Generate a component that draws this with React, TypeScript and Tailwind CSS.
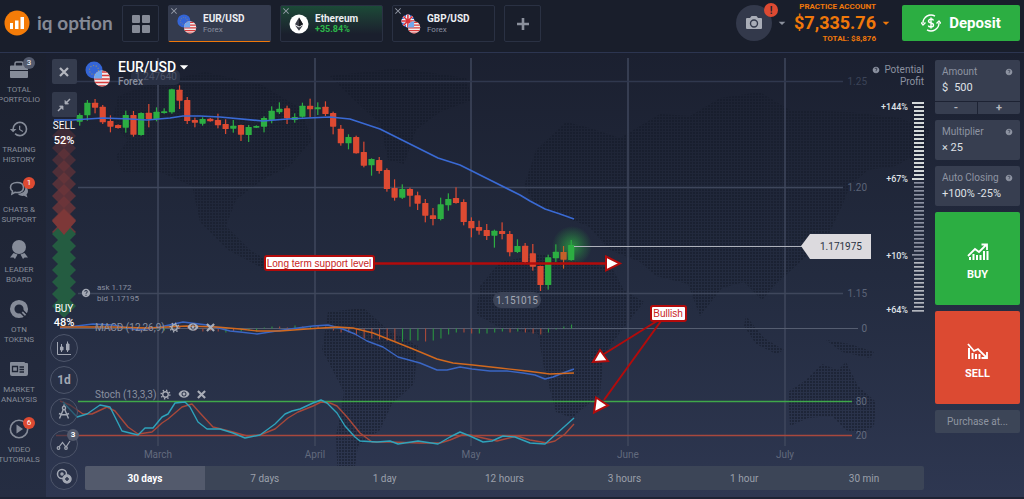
import type { ReactNode } from "react"
import { MdArrowDropDown, MdClose, MdHelp, MdHistory, MdVisibility } from "react-icons/md"

type Candle = [top: number, bottom: number, high: number, low: number, up: 0 | 1]
type Point = [x: number, y: number]

// vertical values are thirds of a chart unit, counted from y = 70
const CANDLES: Candle[] = [
  [135, 155, 130, 167, 1], [98, 136, 90, 152, 1], [98, 113, 87, 130, 0], [110, 157, 105, 162, 0],
  [153, 170, 136, 187, 0], [165, 174, 163, 176, 0], [135, 173, 122, 188, 1], [135, 194, 123, 200, 0],
  [129, 195, 127, 197, 1], [128, 147, 102, 172, 0], [125, 148, 112, 154, 1], [124, 129, 115, 131, 1],
  [58, 127, 56, 131, 1], [59, 92, 46, 117, 0], [90, 153, 81, 162, 0], [150, 158, 143, 172, 0],
  [147, 161, 142, 167, 1], [146, 154, 144, 155, 0], [150, 166, 131, 175, 0], [162, 177, 148, 192, 0],
  [167, 176, 150, 188, 1], [165, 194, 164, 213, 0], [171, 195, 165, 216, 1], [168, 173, 166, 174, 1],
  [144, 170, 139, 187, 1], [122, 150, 109, 160, 1], [116, 127, 97, 132, 1], [115, 145, 107, 162, 0],
  [141, 150, 130, 158, 1], [107, 140, 98, 143, 1], [107, 118, 86, 142, 0], [112, 118, 97, 135, 1],
  [110, 132, 94, 138, 0], [129, 170, 125, 193, 0], [176, 220, 165, 227, 0], [201, 220, 193, 238, 1],
  [201, 250, 197, 251, 0], [246, 287, 215, 292, 0], [267, 286, 265, 317, 1], [270, 303, 261, 311, 0],
  [300, 357, 295, 365, 0], [354, 383, 328, 392, 0], [357, 383, 343, 387, 1], [357, 377, 353, 410, 0],
  [376, 401, 365, 420, 0], [399, 437, 387, 457, 0], [436, 447, 414, 466, 0], [403, 447, 383, 451, 1],
  [387, 406, 370, 422, 1], [384, 399, 352, 401, 0], [396, 456, 388, 466, 0], [453, 475, 442, 502, 0],
  [471, 482, 452, 494, 0], [480, 498, 462, 510, 0], [482, 497, 479, 533, 1], [483, 492, 457, 508, 0],
  [492, 547, 483, 559, 0], [528, 546, 508, 549, 1], [527, 576, 519, 580, 0], [550, 590, 522, 602, 0],
  [588, 645, 587, 663, 0], [562, 645, 554, 659, 1], [545, 565, 523, 576, 1], [546, 569, 528, 596, 0],
  [525, 570, 510, 572, 1],
]

const MOVING_AVERAGE: Point[] = [
  [54, 120], [72, 120], [103, 118], [130, 119], [147, 120], [170, 118], [183, 116], [200, 116], [220, 117],
  [263, 121], [287, 119], [330, 117], [350, 119], [380, 129], [400, 139], [420, 149], [438, 158], [460, 165],
  [490, 180], [520, 195], [530, 201], [545, 209], [560, 214], [574, 219],
]

const MACD_FAST: Point[] = [
  [60, 328], [93, 324], [113, 325], [138, 330], [160, 327], [183, 322], [207, 325], [230, 331], [240, 332],
  [257, 334], [270, 332], [290, 329], [313, 326], [328, 325], [340, 328], [355, 334], [367, 341], [383, 347],
  [398, 357], [420, 363], [437, 370], [447, 370], [460, 367], [472, 369], [490, 371], [507, 371], [523, 373],
  [535, 375], [545, 379], [553, 377], [563, 373], [574, 369],
]

const MACD_SLOW: Point[] = [
  [60, 327], [113, 327], [147, 328], [187, 326], [217, 327], [240, 329], [257, 331], [280, 331], [307, 329],
  [337, 327], [353, 328], [373, 333], [393, 341], [413, 349], [437, 359], [453, 363], [473, 365], [500, 368],
  [527, 371], [550, 374], [574, 373],
]

const STOCH_FAST: Point[] = [
  [63, 402], [77, 417], [87, 414], [100, 405], [110, 407], [122, 431], [138, 435], [145, 428], [153, 428],
  [162, 417], [168, 414], [175, 403], [185, 402], [190, 407], [198, 422], [207, 429], [220, 429], [233, 433],
  [245, 438], [260, 435], [275, 424], [285, 414], [292, 411], [300, 409], [313, 403], [321, 400], [327, 403],
  [337, 413], [345, 426], [355, 437], [360, 441], [377, 442], [390, 441], [398, 444], [418, 441], [438, 444],
  [450, 437], [460, 432], [470, 436], [483, 442], [492, 441], [503, 436], [515, 437], [530, 443], [545, 444],
  [574, 418],
]

const STOCH_SLOW: Point[] = [
  [60, 401], [70, 405], [83, 414], [92, 414], [107, 407], [115, 411], [128, 427], [138, 434], [152, 432],
  [162, 423], [168, 419], [182, 407], [192, 404], [200, 413], [213, 427], [233, 432], [247, 436], [260, 435],
  [275, 429], [288, 418], [298, 412], [313, 406], [321, 402], [330, 403], [337, 406], [347, 417], [360, 433],
  [372, 442], [390, 442], [420, 443], [440, 443], [450, 440], [462, 435], [470, 435], [483, 438], [497, 441],
  [517, 436], [530, 440], [547, 443], [555, 441], [565, 434], [574, 424],
]

// signed bar lengths, the last one under the last candle
const HISTOGRAM: [length: number, up: 0 | 1][] = [
  [2, 0], [1, 0], [1, 1], [2, 0], [3, 0], [2, 0], [1, 1], [2, 1], [-2, 1], [-2, 0], [-1, 0], [2, 0], [3, 0],
  [2, 0], [3, 0], [4, 1], [3, 0], [3, 1], [2, 1], [3, 1], [-1, 1], [-2, 1], [-2, 0], [-1, 0], [-3, 1], [-2, 0],
  [-2, 1], [-3, 0], [-2, 0], [2, 0], [4, 0], [4, 0], [7, 0], [10, 0], [10, 0], [11, 0], [12, 0], [13, 0],
  [13, 1], [12, 1], [12, 1], [13, 0], [12, 1], [10, 1], [6, 1], [4, 1], [4, 0], [5, 0], [5, 1], [5, 1], [4, 1],
  [3, 1], [4, 0], [3, 1], [4, 0], [5, 0], [6, 0], [4, 1], [1, 1], [-2, 1], [-4, 1],
]

const CONTINENTS = [
  "118,96 150,84 205,72 260,84 300,108 312,140 290,166 262,180 236,200 226,226 250,250 270,262 262,268 228,250 200,222 192,186 160,172 122,172 116,156 128,140 112,124",
  "330,76 400,68 466,78 472,100 440,112 416,130 404,164 388,160 380,124 350,96",
  "328,312 364,308 388,330 418,346 414,384 392,404 380,430 358,446 352,486 338,482 336,436 344,392 322,350",
  "524,186 536,150 566,122 590,128 620,138 660,114 690,116 720,98 760,92 790,110 850,112 900,118 930,130 924,150 896,166 868,170 850,186 842,206 828,236 800,262 776,284 762,300 744,282 722,288 700,316 688,284 656,276 640,262 610,250 588,226 560,216 536,206",
  "480,286 500,262 540,254 580,262 612,268 624,290 644,302 622,330 604,354 600,394 572,418 556,412 544,368 538,334 500,328 476,314",
  "788,392 806,380 822,364 838,370 846,362 858,386 876,402 874,426 860,434 846,430 832,416 808,418 790,426",
  "746,316 764,338 784,350 776,354 756,344 744,326",
  "826,340 850,344 874,352 870,358 842,352",
]

const GRID_X: [number, string][] = [[158, "March"], [315, "April"], [471, "May"], [628, "June"], [785, "July"]]
const GRID_Y: [number, string][] = [[81, "1.25"], [187, "1.20"], [293, "1.15"]]

const TIMEFRAMES = ["30 days", "7 days", "1 day", "12 hours", "3 hours", "1 hour", "30 min"]

const toPath = (points: Point[]) => "M" + points.map((p) => p.join(" ")).join("L")

function Chart() {
  return (
    <svg
      viewBox="46 53 978 444"
      preserveAspectRatio="xMinYMin meet"
      className="pointer-events-none absolute inset-0 size-full font-[Roboto,sans-serif] text-[10px]"
      role="img"
      aria-label="EUR/USD price chart"
    >
      <defs>
        <pattern id="dots" width="3" height="3" patternUnits="userSpaceOnUse">
          <rect width="2" height="2" fill="#141a28" />
        </pattern>
        <radialGradient id="glow">
          <stop offset="0" stopColor="#2cae42" stopOpacity="0.75" />
          <stop offset="0.6" stopColor="#2cae42" stopOpacity="0.28" />
          <stop offset="1" stopColor="#2cae42" stopOpacity="0" />
        </radialGradient>
      </defs>

      <g fill="url(#dots)" opacity="0.5">
        {CONTINENTS.map((points) => (
          <polygon key={points} points={points} />
        ))}
      </g>

      <g stroke="#3f475c">
        {GRID_X.map(([x]) => (
          <path key={x} d={`M${x} 58V446`} strokeWidth="1.500" />
        ))}
        <path d="M56 81.500H843" stroke="#30384e" strokeWidth="1.500" />
        <path d="M78 187.500H843" strokeWidth="1.500" />
        <path d="M78 293.500H843" strokeWidth="1.500" />
        <path d="M60 328.500H858" stroke="#555d70" />
      </g>
      <g fill="#626a7d">
        {GRID_Y.map(([y, label]) => (
          <text key={label} x="867" y={y + 4} textAnchor="end" fill={y < 100 ? "#3b4357" : "#5b6377"}>
            {label}
          </text>
        ))}
        <text x="867" y="332" textAnchor="end">0</text>
        <text x="867" y="405" textAnchor="end">80</text>
        <text x="867" y="439" textAnchor="end">20</text>
        {GRID_X.map(([x, label]) => (
          <text key={label} x={x} y="458" textAnchor="middle">{label}</text>
        ))}
      </g>

      <g>
        {Array.from({ length: 9 }, (_, i) => (
          <path key={i} d={`M64 ${124 + i * 12}l12 12l-12 12l-12 -12z`} fill="#6f3639" opacity={0.4 + i * 0.07} />
        ))}
        {Array.from({ length: 7 }, (_, i) => (
          <path key={i} d={`M64 ${222 + i * 12}l12 12l-12 12l-12 -12z`} fill="#245c41" />
        ))}
        <path d="M52 221l12 -12l12 12l-12 14z" fill="#7d3838" />
      </g>

      <g>
        <rect x="131" y="70" width="49" height="15" rx="5" fill="#293044" />
        <text x="156" y="80" textAnchor="middle" fill="#4b5367">1.247640</text>
      </g>

      <circle cx="572" cy="246" r="20" fill="url(#glow)" />
      {CANDLES.map(([top, bottom, high, low, up], i) => {
        const x = 79.7 + i * 7.68
        const fill = i === 63 ? "#c3602a" : up ? "#2cae42" : "#dd4a32"
        return (
          <g key={i} fill={fill}>
            <rect x={x - 0.6} y={70 + high / 3} width="1.200" height={(low - high) / 3} />
            <rect x={x - 3.1} y={70 + top / 3} width="6.200" height={(bottom - top) / 3} rx="0.6" />
          </g>
        )
      })}
      <path d={toPath(MOVING_AVERAGE)} fill="none" stroke="#3a6ad4" strokeWidth="1.600" strokeLinejoin="round" />

      {HISTOGRAM.map(([length, up], i) => {
        const x = 571.5 - (HISTOGRAM.length - 1 - i) * 7.68
        return <path key={i} d={`M${x} 328.500v${length}`} stroke={up ? "#2a9440" : "#a94a3a"} strokeWidth="1.100" />
      })}
      <g fill="none" strokeWidth="1.400" strokeLinejoin="round">
        <path d={toPath(MACD_FAST)} stroke="#3a66c4" />
        <path d={toPath(MACD_SLOW)} stroke="#d2691e" />
        <path d="M78 401.500H852" stroke="#3fa84a" strokeWidth="1.500" />
        <path d="M56 435.500H852" stroke="#a8483d" strokeWidth="1.300" />
        <path d={toPath(STOCH_SLOW)} stroke="#a8483a" />
        <path d={toPath(STOCH_FAST)} stroke="#2fa3bb" />
      </g>

      <rect x="493" y="292" width="48" height="16" rx="8" fill="#3b4357" />
      <text x="517" y="304" textAnchor="middle" fill="#a3a8b4">1.151015</text>

      <path d="M574 246.500H802" stroke="#aeb2bb" />
      <path d="M801 246l9-12h61v25h-61z" fill="#dcdade" />
      <text x="841" y="250" textAnchor="middle" fill="#2b3242">1.171975</text>

      <g stroke="#b30b0b" strokeWidth="2" fill="#fff" className="font-['Liberation_Sans',sans-serif]">
        <path d="M374 263.500H606" strokeWidth="2.500" />
        <path d="M606 256.500L620 263.500L606 270.500Z" />
        <path d="M657 321L604 354" />
        <path d="M661 321L604 400" />
        <path d="M600 350L608 361L593 362Z" />
        <path d="M596 397.500L608 405.500L594 412.500Z" />
        <rect x="265" y="256" width="109" height="14" rx="2" />
        <rect x="651" y="306" width="35" height="15" rx="2" />
        <g stroke="none" fill="#c81e1e">
          <text x="319" y="267" textAnchor="middle">Long term support level</text>
          <text x="668" y="317" textAnchor="middle">Bullish</text>
        </g>
      </g>
    </svg>
  )
}

function Flags({ className, from = "eu" }: { className: string; from?: "eu" | "gb" }) {
  return (
    <svg viewBox="0 0 26 26" className={className} aria-hidden="true">
      <defs>
        <clipPath id="usClip"><circle cx="17" cy="17.500" r="8" /></clipPath>
        <clipPath id="gbClip"><circle cx="9" cy="9" r="8.500" /></clipPath>
      </defs>
      {from === "eu" ? (
        <>
          <circle cx="9" cy="9" r="8.500" fill="#3465d6" />
          <circle cx="9" cy="9" r="4.500" fill="none" stroke="#8a8a78" strokeWidth="1.200" strokeDasharray="1.200 1.600" />
        </>
      ) : (
        <g clipPath="url(#gbClip)">
          <rect width="18" height="18" fill="#3560c8" />
          <path d="M0 0L18 18M18 0L0 18" stroke="#f2f2f2" strokeWidth="3" />
          <path d="M9 0V18M0 9H18" stroke="#f2f2f2" strokeWidth="5" />
          <path d="M9 0V18M0 9H18M0 0L18 18M18 0L0 18" stroke="#d8303a" strokeWidth="2" />
        </g>
      )}
      <g clipPath="url(#usClip)">
        <rect x="9" y="9" width="17" height="17" fill="#f3ecec" />
        <path d="M9 11H26M9 14.500H26M9 18H26M9 21.500H26M9 25H26" stroke="#d83a3a" strokeWidth="1.700" />
        <rect x="8" y="8" width="9" height="9.500" fill="#6fa8ee" />
      </g>
    </svg>
  )
}

function EthereumIcon() {
  return (
    <svg viewBox="0 0 20 20" className="size-5 shrink-0" aria-hidden="true">
      <circle cx="10" cy="10" r="9.500" fill="#fff" />
      <path d="M10 3.500L6 10.300L10 12.600L14 10.300Z" fill="#3a3d47" />
      <path d="M10 3.500V12.600L14 10.300Z" fill="#17191f" />
      <path d="M6 11.300L10 16.800L14 11.300L10 13.600Z" fill="#3a3d47" />
    </svg>
  )
}

function AssetTab(props: { icon: ReactNode; name: string; note: string; variant?: "active" | "rise" }) {
  const { icon, name, note, variant } = props
  const look =
    variant === "active"
      ? "bg-[#343b4e] border-[#343b4e] border-b-[#f0780a]"
      : variant === "rise"
        ? "border-[#2a3143] bg-linear-to-b from-[#1b4a37] to-[#1a1f2d] to-80%"
        : "border-[#2a3143]"
  return (
    <div className={`relative h-[37px] w-[103px] rounded-xs border ${look}`}>
      <button className="flex size-full items-center gap-1.5 pl-2 text-left">
        {icon}
        <span className="leading-[11px]">
          <span className="block text-[10px] font-bold text-[#eceef2]">{name}</span>
          <span className={variant === "rise" ? "block text-[9px] font-bold text-[#2cb84a]" : "block text-[8px] text-[#8b91a0]"}>
            {note}
          </span>
        </span>
      </button>
      <button aria-label={`Close ${name}`} className="absolute top-0 left-0 text-[#9ba0ad]">
        <MdClose className="size-2.5" />
      </button>
    </div>
  )
}

function Header() {
  return (
    <header className="flex h-[53px] shrink-0 items-start border-b border-[#2c3550] bg-[#191e2b] pt-[5px] pr-1 pl-1">
      <a href="#" className="flex h-9 w-[108px] shrink-0 items-center gap-[7px]">
        <svg viewBox="0 0 26 26" className="size-[26px] shrink-0" aria-hidden="true">
          <circle cx="13" cy="13" r="12.500" fill="#f57c08" />
          <path d="M6 13h3v6h-3zM11 10.500h3.500v8.500h-3.500zM16.500 7h3.500v12h-3.500z" fill="#fff" />
        </svg>
        <span className="font-[Lato,sans-serif] text-[19px] leading-9 font-bold whitespace-nowrap text-[#858a96]">
          iq option
        </span>
      </a>
      <div className="ml-[10px] flex shrink-0 gap-[9px]">
        <button aria-label="All assets" className="flex size-[37px] items-center justify-center rounded-xs border border-[#2a3143]">
          <span className="grid grid-cols-2 gap-0.5">
            <i className="size-2 rounded-[1px] bg-[#868b97]" />
            <i className="size-2 rounded-[1px] bg-[#868b97]" />
            <i className="size-2 rounded-[1px] bg-[#868b97]" />
            <i className="size-2 rounded-[1px] bg-[#868b97]" />
          </span>
        </button>
        <AssetTab icon={<Flags className="size-5 shrink-0" />} name="EUR/USD" note="Forex" variant="active" />
        <AssetTab icon={<EthereumIcon />} name="Ethereum" note="+35.84%" variant="rise" />
        <AssetTab icon={<Flags className="size-5 shrink-0" from="gb" />} name="GBP/USD" note="Forex" />
        <button aria-label="Add asset" className="flex size-[37px] items-center justify-center rounded-xs border border-[#2a3143]">
          <svg viewBox="0 0 14 14" className="size-3.5">
            <path d="M7 1V13M1 7H13" stroke="#8b909c" strokeWidth="2.600" />
          </svg>
        </button>
      </div>

      <div className="ml-auto flex shrink-0 items-start">
        <button aria-label="Screenshot" className="relative flex size-9 items-center justify-center rounded-full bg-[#33394b]">
          <svg viewBox="0 0 18 16" className="h-4 w-[18px]">
            <path d="M2 3h3l1.500-2h5l1.500 2h3q1 0 1 1v9q0 1-1 1h-14q-1 0-1-1v-9q0-1 1-1z" fill="#a9adb7" />
            <circle cx="9" cy="8.500" r="3.500" fill="none" stroke="#33394b" strokeWidth="1.400" />
          </svg>
          <span className="absolute -top-0.5 -right-1.5 flex size-3.5 items-center justify-center rounded-full bg-[#dd4a32] text-[10px] font-bold text-[#1d1f2c]">
            !
          </span>
        </button>
        <MdArrowDropDown className="mt-2.5 ml-0.5 size-4 text-[#8b909c]" />
        <button className="ml-1 flex items-center text-[#f0780a]">
          <span className="-mt-1 flex flex-col items-end font-bold">
            <span className="text-[8px] leading-3">PRACTICE ACCOUNT</span>
            <span className="text-[18px] leading-5">$7,335.76</span>
            <span className="text-[8px] leading-3">TOTAL: $8,876</span>
          </span>
          <MdArrowDropDown className="-mt-1 ml-0.5 size-4" />
        </button>
        <button className="ml-2 flex h-9 w-[118px] items-center justify-center gap-2 rounded-xs bg-[#2cae42] text-[15px] font-bold text-white">
          <svg viewBox="0 0 20 20" className="size-5" fill="none" stroke="#fff" strokeWidth="1.400">
            <path d="M2 10A8 8 0 0 1 14 3.100M18 10A8 8 0 0 1 6 16.900M4 4.500Q6 2.500 8.500 2" />
            <path d="M0 9.500L2 12L4.500 9.500M20 10.500L18 8L15.500 10.500" />
            <path d="M12.500 7.500Q12 6 10 6T7.500 8Q7.500 9.500 10 10T12.500 12Q12.500 14 10 14T7.500 12.500M10 4.500V15.500" />
          </svg>
          Deposit
        </button>
      </div>
    </header>
  )
}

const NAV: { lines: [string, string]; badge?: number; icon: ReactNode }[] = [
  {
    lines: ["TOTAL", "PORTFOLIO"],
    badge: 3,
    icon: (
      <>
        <path d="M6 7V4.500Q6 3 7.500 3H12.500Q14 3 14 4.500V7" fill="none" stroke="currentColor" strokeWidth="1.500" />
        <path d="M2 6.500h16q1 0 1 1v3.500h-18v-3.500q0-1 1-1zM1 12h18v6q0 1-1 1h-16q-1 0-1-1z" />
      </>
    ),
  },
  { lines: ["TRADING", "HISTORY"], icon: <MdHistory size={20} /> },
  {
    lines: ["CHATS &", "SUPPORT"],
    badge: 1,
    icon: (
      <>
        <path d="M8 3.500c4 0 6.500 2 6.500 5s-2.500 5-6.500 5q-1 0-2-.2l-3 1.700.5-2.800q-2-1.400-2-3.700c0-3 2.500-5 6.500-5z" fill="none" stroke="currentColor" strokeWidth="1.600" />
        <path d="M16.500 7.500q2.500 1.300 2.500 4.500 0 2-1.500 3.500l1 3-3.500-1.700q-4.500.7-6.500-2 8 0 8-7.300z" />
      </>
    ),
  },
  {
    lines: ["LEADER", "BOARD"],
    icon: (
      <>
        <circle cx="10" cy="8" r="7" />
        <path d="M4.500 14L1 18.500H4.500L6 20L8.500 15.500ZM15.500 14L19 18.500H15.500L14 20L11.500 15.500Z" />
      </>
    ),
  },
  {
    lines: ["OTN", "TOKENS"],
    icon: (
      <>
        <circle cx="10" cy="10" r="6.800" fill="none" stroke="currentColor" strokeWidth="4.500" />
        <path d="M10 12L18 20M13 10.500L20 17.500" stroke="#1f2535" strokeWidth="1.500" />
      </>
    ),
  },
  {
    lines: ["MARKET", "ANALYSIS"],
    icon: (
      <>
        <path d="M2 3h13q1 0 1 1h2q1 0 1 1v10q0 2-2 2h-14q-2 0-2-2v-11q0-1 1-1z" />
        <path d="M3.500 7.500h5v5h-5zM10.500 8H15M10.500 10.500H15M10.500 13H15" fill="none" stroke="#1f2535" strokeWidth="1.300" />
      </>
    ),
  },
  {
    lines: ["VIDEO", "TUTORIALS"],
    badge: 6,
    icon: (
      <>
        <circle cx="10" cy="10" r="8.700" fill="none" stroke="currentColor" strokeWidth="1.600" />
        <path d="M7.500 5.500L14 10L7.500 14.500Z" />
      </>
    ),
  },
]

function Sidebar() {
  return (
    <nav className="w-[46px] shrink-0 bg-linear-to-b from-[#1b202e] to-[#252d42] pt-1.5">
      <ul className="flex w-[38px] flex-col">
        {NAV.map(({ lines, badge, icon }) => (
          <li key={lines[1]} className="h-[60px]">
            <a href="#" className="flex w-full flex-col items-center text-[#868c99]">
              <span className="relative">
                <svg viewBox="0 0 20 20" className="size-5" fill="currentColor" aria-hidden="true">
                  {icon}
                </svg>
                {badge && (
                  <span
                    className={`absolute -top-0.5 -right-1.5 flex size-3 items-center justify-center rounded-full text-[8px] text-white ${
                      badge === 3 ? "bg-[#545b6e]" : "bg-[#dd4a32]"
                    }`}
                  >
                    {badge}
                  </span>
                )}
              </span>
              <span className="mt-1.5 flex flex-col items-center text-[8px] leading-[10px] whitespace-nowrap">
                <span>{lines[0]}</span>
                <span>{lines[1]}</span>
              </span>
            </a>
          </li>
        ))}
      </ul>
    </nav>
  )
}

function RoundButton({ label, children }: { label: string; children: ReactNode }) {
  return (
    <button
      aria-label={label}
      className="relative flex size-7 items-center justify-center rounded-full border border-[#4d556a] bg-[#2a3247]/60 text-[12px] font-bold text-[#a3a8b4]"
    >
      {children}
    </button>
  )
}

function ToolColumn() {
  return (
    <div className="flex w-7 shrink-0 flex-col items-center text-white">
      <div className="flex flex-col gap-2">
        <button aria-label="Close chart" className="flex size-[25px] items-center justify-center rounded-xs bg-[#353c4e]">
          <svg viewBox="0 0 10 10" className="size-2.5">
            <path d="M1 1L9 9M9 1L1 9" stroke="#b4b7bf" strokeWidth="2.200" />
          </svg>
        </button>
        <button aria-label="Collapse chart" className="flex size-[25px] items-center justify-center rounded-xs bg-[#353c4e]/90">
          <svg viewBox="0 0 14 14" className="size-3.5" fill="#a9adb7" stroke="#a9adb7" strokeWidth="1.500">
            <path d="M13 1L9 5M1 13L5 9" />
            <path d="M8 2.500V6H11.500ZM6 11.500V8H2.500Z" strokeWidth="0.800" />
          </svg>
        </button>
      </div>
      <div className="flex h-[213px] flex-col items-center justify-between pt-px">
        <div className="text-center leading-[15px]">
          <div className="text-[10px]">SELL</div>
          <div className="text-[11px] font-medium">52%</div>
        </div>
        <div className="text-center leading-[14px]">
          <div className="text-[10px]">BUY</div>
          <div className="text-[11px] font-medium">48%</div>
        </div>
      </div>
      <div className="mt-1 flex flex-col gap-1">
        <RoundButton label="Chart type">
          <svg viewBox="0 0 16 16" className="size-4" fill="#a3a8b4" stroke="#a3a8b4">
            <path d="M1.500 2V14.500H15" fill="none" />
            <path d="M5.500 4V12M11.500 1.500V12" />
            <path d="M4.500 7h2.500v3h-2.500zM10.500 4h2.500v6h-2.500z" />
          </svg>
        </RoundButton>
        <RoundButton label="Candle period">1d</RoundButton>
        <RoundButton label="Drawing tools">
          <svg viewBox="0 0 16 16" className="size-4" fill="none" stroke="#a3a8b4" strokeWidth="1.400">
            <circle cx="8" cy="4" r="1.600" />
            <path d="M8 0.500V2.500M7.300 5.500L3.500 14.500M8.700 5.500L12.500 14.500M3 9.500Q8 12 13 9.500" />
          </svg>
        </RoundButton>
        <RoundButton label="Indicators">
          <svg viewBox="0 0 16 16" className="size-4" fill="none" stroke="#a3a8b4" strokeWidth="1.200">
            <path d="M3 11L6.500 6.500L10 11L14 5" />
            <circle cx="2.500" cy="12" r="1.300" />
            <circle cx="10" cy="12" r="1.300" />
          </svg>
          <span className="absolute -top-0.5 -right-0.5 flex size-3 items-center justify-center rounded-full bg-[#545b6e] text-[8px] text-white">
            3
          </span>
        </RoundButton>
        <RoundButton label="Trade settings">
          <svg viewBox="0 0 16 16" className="size-4" fill="none" stroke="#a3a8b4" strokeWidth="1.500">
            <circle cx="6" cy="6" r="4.500" />
            <circle cx="6" cy="6" r="1" />
            <circle cx="11" cy="11" r="4" fill="#a3a8b4" />
            <path d="M9 11H13M11 9V13" stroke="#2d354b" />
          </svg>
        </RoundButton>
      </div>
    </div>
  )
}

function IndicatorLegend({ name }: { name: string }) {
  return (
    <div className="flex h-4 items-center gap-1 text-[10px] text-[#8a90a0]">
      <span>{name}</span>
      <span className="flex items-center gap-[7px] text-[#a9adb7]">
        <button aria-label={`${name} settings`}>
          <svg viewBox="0 0 12 12" className="size-[11px]" fill="none" stroke="currentColor">
            <circle cx="6" cy="6" r="3" strokeWidth="1.500" />
            <circle cx="6" cy="6" r="4.700" strokeWidth="1.600" strokeDasharray="1.500 2.190" />
          </svg>
        </button>
        <button aria-label={`Hide ${name}`}><MdVisibility className="size-3" /></button>
        <button aria-label={`Remove ${name}`}>
          <svg viewBox="0 0 10 10" className="size-[9px]">
            <path d="M1 1L9 9M9 1L1 9" stroke="currentColor" strokeWidth="2.400" />
          </svg>
        </button>
      </span>
    </div>
  )
}

function ChartOverlay() {
  return (
    <div className="flex-1">
      <div className="flex h-[30px] items-start gap-[7px]">
        <Flags className="mt-0.5 size-[26px]" />
        <div>
          <button className="flex h-4 items-center text-[14px] leading-4 font-medium text-white">
            EUR/USD
            <MdArrowDropDown className="-ml-0.5 size-5" />
          </button>
          <div className="text-[10px] leading-[14px] font-medium text-[#8b91a0]">Forex</div>
        </div>
      </div>
      <div className="mt-[193px] flex items-center gap-1.5 text-[8px] leading-[11px] text-[#8a90a0]">
        <MdHelp className="-ml-1 size-2.5 text-[#a3a8b4]" />
        <div>
          <div>ask 1.172</div>
          <div>bid 1.17195</div>
        </div>
      </div>
      <div className="mt-[15px] ml-[10px] flex flex-col gap-[51px]">
        <IndicatorLegend name="MACD (12,26,9)" />
        <IndicatorLegend name="Stoch (13,3,3)" />
      </div>
    </div>
  )
}

function ProfitScale() {
  return (
    <div className="w-[60px] shrink-0 text-[#8b91a0]">
      <div className="flex items-start justify-end gap-1 pt-[5px] text-right text-[10px] leading-3">
        <MdHelp className="mt-0.5 size-2" />
        <span>Potential<br />Profit</span>
      </div>
      <div className="mt-[14px] flex justify-end gap-1">
        <div className="flex flex-col text-right text-[9px] leading-[10px] font-medium text-[#dfe1e6]">
          <span>+144%</span>
          <span className="mt-[62px]">+67%</span>
          <span className="mt-[67px]">+10%</span>
          <span className="mt-[44px]">+64%</span>
        </div>
        <svg viewBox="0 0 12 210" className="h-[210px] w-3 shrink-0" aria-hidden="true">
          {Array.from({ length: 53 }, (_, i) => {
            const major = i === 0 || i === 19 || i === 38 || i === 52
            const tone = i < 20 ? "#d3d8d8" : i < 40 ? "#8b90a0" : "#b2b6be"
            return <rect key={i} x={major ? 0 : 2} y={i * 4} width={major ? 12 : 10} height={i < 20 ? 2 : 1.7} fill={tone} />
          })}
        </svg>
      </div>
    </div>
  )
}

function FieldLabel({ children }: { children: ReactNode }) {
  return (
    <span className="flex items-center justify-between text-[10px] leading-4 whitespace-nowrap text-[#8e94a2]">
      {children}
      <MdHelp className="size-2 shrink-0" />
    </span>
  )
}

function TradePanel() {
  return (
    <aside className="relative mr-1 ml-[11px] flex w-[85px] shrink-0 flex-col gap-1.5 pt-[7px]">
      <div className="flex flex-col gap-px">
        <label className="block h-[41px] rounded-t-xs bg-[#373e50] px-[7px] pt-1">
          <FieldLabel>Amount</FieldLabel>
          <span className="flex gap-1.5 text-[11px] leading-4 text-[#dfe1e6]">
            $
            <input defaultValue="500" className="w-full min-w-0 bg-transparent outline-none" />
          </span>
        </label>
        <div className="flex gap-px text-[#b4b7bf]">
          <button aria-label="Decrease amount" className="h-3 flex-1 rounded-bl-xs bg-[#373e50] text-[11px] leading-3 font-bold">-</button>
          <button aria-label="Increase amount" className="h-3 flex-1 rounded-br-xs bg-[#373e50] text-[11px] leading-3 font-bold">+</button>
        </div>
      </div>
      <button className="h-10 rounded-xs bg-[#373e50] px-[7px] text-left">
        <FieldLabel>Multiplier</FieldLabel>
        <span className="block text-[11px] leading-4 text-[#dfe1e6]">× 25</span>
      </button>
      <button className="h-10 rounded-xs bg-[#373e50] px-[7px] text-left">
        <FieldLabel>Auto Closing</FieldLabel>
        <span className="block text-[11px] leading-4 text-[#dfe1e6]">+100% -25%</span>
      </button>
      <button className="flex h-[93px] flex-col items-center justify-center gap-1.5 rounded-xs bg-[#2cae42] pt-2.5 text-[11px] font-bold text-white">
        <svg viewBox="0 0 22 18" className="h-[18px] w-[22px]" fill="none" stroke="#fff" strokeWidth="1.800">
          <path d="M1 13L8 6L12 9L19 2M14.500 1.500H20V7" />
          <path d="M3 17V14M6.500 17V11M10 17V12M13.500 17V12M17 17V8M20.500 17V8" strokeWidth="2" />
        </svg>
        BUY
      </button>
      <button className="flex h-[93px] flex-col items-center justify-center gap-1.5 rounded-xs bg-[#dc4a32] pt-2.5 text-[11px] font-bold text-white">
        <svg viewBox="0 0 22 18" className="h-[18px] w-[22px]" fill="none" stroke="#fff" strokeWidth="1.800">
          <path d="M1 2L7 9L11 7L19 15M20 10V16H14.500" />
          <path d="M2 17V6M5.500 17V11M9 17V12M12.500 17V12" strokeWidth="2" />
        </svg>
        SELL
      </button>
      <button className="h-[23px] rounded-xs bg-[#3c4557] text-[10px] text-[#8f95a1]">Purchase at...</button>
    </aside>
  )
}

export default function App() {
  return (
    <div className="flex min-h-screen flex-col bg-[#1b2030] font-[Roboto,sans-serif]">
      <Header />
      <div className="flex flex-1 border-b-2 border-[#1d2334]">
        <Sidebar />
        <main className="relative flex flex-1 bg-linear-to-b from-[#1b2030] via-[#232b3f] to-[#2e3751]">
          <Chart />
          <div className="relative flex flex-1 gap-[7px] pt-1.5 pl-1">
            <ToolColumn />
            <div className="flex flex-1 flex-col pb-[7px]">
              <div className="flex flex-1">
                <ChartOverlay />
                <ProfitScale />
              </div>
              <div className="flex h-6 rounded-xs bg-[#3c4557] text-[10px] text-[#9ba0ab]">
                {TIMEFRAMES.map((label, i) => (
                  <button key={label} className={i === 0 ? "flex-1 rounded-l-xs bg-[#535a6c] font-bold text-white" : "flex-1"}>
                    {label}
                  </button>
                ))}
              </div>
            </div>
          </div>
          <TradePanel />
        </main>
      </div>
    </div>
  )
}
